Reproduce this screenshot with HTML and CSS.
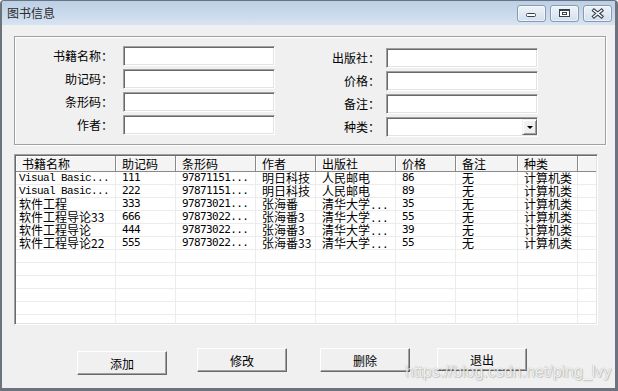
FILE: index.html
```html
<!DOCTYPE html>
<html lang="zh-CN">
<head>
<meta charset="utf-8">
<title>图书信息</title>
<link rel="stylesheet" href="styles.css">
</head>
<body>
<div class="window">
  <div class="titlebar">
    <span class="title">图书信息</span>
    <div class="caption">
      <span class="cbtn"><svg width="27" height="15" viewBox="0 0 27 15"><rect x="8.5" y="7.5" width="9" height="3" rx="1" fill="#fff" stroke="#36404e"/></svg></span>
      <span class="cbtn"><svg width="27" height="15" viewBox="0 0 27 15"><rect x="8.5" y="3.5" width="10" height="7" fill="#fff" stroke="#36404e"/><rect x="8.5" y="3.5" width="10" height="1.5" fill="#36404e"/><rect x="11.5" y="6.5" width="4" height="2" fill="none" stroke="#36404e"/></svg></span>
      <span class="cbtn"><svg width="27" height="15" viewBox="0 0 27 15"><path d="M10 4.5 L17.5 10.5 M17.5 4.5 L10 10.5" stroke="#36404e" stroke-width="3.6" stroke-linecap="square"/><path d="M10 4.5 L17.5 10.5 M17.5 4.5 L10 10.5" stroke="#fff" stroke-width="1.6" stroke-linecap="square"/></svg></span>
    </div>
  </div>
  <div class="client">
    <div class="group">
      <div class="form form-left">
        <span class="lbl">书籍名称：</span><span class="field"></span>
        <span class="lbl">助记码：</span><span class="field"></span>
        <span class="lbl">条形码：</span><span class="field"></span>
        <span class="lbl">作者：</span><span class="field"></span>
      </div>
      <div class="form form-right">
        <span class="lbl">出版社：</span><span class="field"></span>
        <span class="lbl">价格：</span><span class="field"></span>
        <span class="lbl">备注：</span><span class="field"></span>
        <span class="lbl">种类：</span><span class="field combo"><span class="dd"><span class="tri"></span></span></span>
      </div>
    </div>

    <div class="listview">
      <div class="lv-row lv-head">
        <span class="hc">书籍名称</span><span class="hc">助记码</span><span class="hc">条形码</span><span class="hc">作者</span><span class="hc">出版社</span><span class="hc">价格</span><span class="hc">备注</span><span class="hc">种类</span><span class="hc"></span>
      </div>
      <div class="lv-row">
        <span class="c first mono">Visual Basic...</span><span class="c num">111</span><span class="c num">97871151...</span><span class="c">明日科技</span><span class="c">人民邮电</span><span class="c num">86</span><span class="c">无</span><span class="c">计算机类</span><span class="c last"></span>
      </div>
      <div class="lv-row">
        <span class="c first mono">Visual Basic...</span><span class="c num">222</span><span class="c num">97871151...</span><span class="c">明日科技</span><span class="c">人民邮电</span><span class="c num">89</span><span class="c">无</span><span class="c">计算机类</span><span class="c last"></span>
      </div>
      <div class="lv-row">
        <span class="c first">软件工程</span><span class="c num">333</span><span class="c num">97873021...</span><span class="c">张海番</span><span class="c">清华大学<span class="num">...</span></span><span class="c num">35</span><span class="c">无</span><span class="c">计算机类</span><span class="c last"></span>
      </div>
      <div class="lv-row">
        <span class="c first">软件工程导论33</span><span class="c num">666</span><span class="c num">97873022...</span><span class="c">张海番3</span><span class="c">清华大学<span class="num">...</span></span><span class="c num">55</span><span class="c">无</span><span class="c">计算机类</span><span class="c last"></span>
      </div>
      <div class="lv-row">
        <span class="c first">软件工程导论</span><span class="c num">444</span><span class="c num">97873022...</span><span class="c">张海番3</span><span class="c">清华大学<span class="num">...</span></span><span class="c num">39</span><span class="c">无</span><span class="c">计算机类</span><span class="c last"></span>
      </div>
      <div class="lv-row">
        <span class="c first">软件工程导论22</span><span class="c num">555</span><span class="c num">97873022...</span><span class="c">张海番33</span><span class="c">清华大学<span class="num">...</span></span><span class="c num">55</span><span class="c">无</span><span class="c">计算机类</span><span class="c last"></span>
      </div>
      <div class="lv-row"><span class="c"></span><span class="c"></span><span class="c"></span><span class="c"></span><span class="c"></span><span class="c"></span><span class="c"></span><span class="c"></span><span class="c last"></span></div>
      <div class="lv-row"><span class="c"></span><span class="c"></span><span class="c"></span><span class="c"></span><span class="c"></span><span class="c"></span><span class="c"></span><span class="c"></span><span class="c last"></span></div>
      <div class="lv-row"><span class="c"></span><span class="c"></span><span class="c"></span><span class="c"></span><span class="c"></span><span class="c"></span><span class="c"></span><span class="c"></span><span class="c last"></span></div>
      <div class="lv-row"><span class="c"></span><span class="c"></span><span class="c"></span><span class="c"></span><span class="c"></span><span class="c"></span><span class="c"></span><span class="c"></span><span class="c last"></span></div>
      <div class="lv-row"><span class="c"></span><span class="c"></span><span class="c"></span><span class="c"></span><span class="c"></span><span class="c"></span><span class="c"></span><span class="c"></span><span class="c last"></span></div>
      <div class="lv-row"><span class="c"></span><span class="c"></span><span class="c"></span><span class="c"></span><span class="c"></span><span class="c"></span><span class="c"></span><span class="c"></span><span class="c last"></span></div>
    </div>

    <div class="buttons">
      <button class="btn btn-add">添加</button>
      <button class="btn btn-edit">修改</button>
      <button class="btn btn-del">删除</button>
      <button class="btn btn-exit">退出</button>
    </div>
  </div>
  <div class="watermark">https://blog.csdn.net/ping_lvy</div>
</div>
</body>
</html>
```

FILE: styles.css
```css
* { box-sizing: border-box; }
html, body { margin: 0; padding: 0; }
body {
  width: 618px;
  height: 391px;
  overflow: hidden;
  background: #fff;
  font-family: "Noto Sans CJK SC", "Liberation Sans", sans-serif;
  font-size: 12px;
  color: #000;
}
.window {
  position: relative;
  width: 618px;
  height: 391px;
  border-style: solid;
  border-color: #6a737e;
  border-width: 1px 3px 3px 2px;
  border-radius: 4px 4px 0 0;
  background: #f0f0f0;
  display: flex;
  flex-direction: column;
  overflow: hidden;
}
.titlebar {
  flex: none;
  height: 24px;
  display: flex;
  align-items: flex-start;
  padding: 0 3px 0 5px;
  background: linear-gradient(#bccfe6, #d6e3f2);
}
.title {
  flex: 1;
  line-height: 24px;
  font-size: 12px;
  color: #2b2b2b;
}
.caption {
  display: flex;
  gap: 4px;
  margin-top: 4px;
}
.cbtn {
  display: block;
  width: 29px;
  height: 17px;
  border: 1px solid #8899b1;
  border-radius: 3px;
  background: linear-gradient(#eef3f9, #d3dfed);
  box-shadow: inset 0 0 0 1px rgba(255,255,255,0.55);
}
.cbtn svg { display: block; }

.client {
  flex: 1;
  padding: 11px 0 0 12px;
}

.group {
  width: 592px;
  height: 109px;
  display: flex;
  border: 1px solid #a0a0a0;
  box-shadow: inset 1px 1px 0 #fff, 1px 1px 0 #fff;
}
.form {
  display: grid;
  grid-auto-rows: 20px;
  row-gap: 3px;
  align-content: start;
}
.form-left {
  grid-template-columns: 98px 152px;
  column-gap: 10px;
  padding-top: 9px;
}
.form-right {
  grid-template-columns: 80px 152px;
  column-gap: 6px;
  padding-top: 11px;
  margin-left: 25px;
}
.lbl {
  text-align: right;
  line-height: 20px;
  white-space: nowrap;
  color: #000;
}
.field {
  display: block;
  background: #fff;
  border: 1px solid;
  border-color: #a0a0a0 #fff #fff #a0a0a0;
  box-shadow: inset 1px 1px 0 #696969, inset -1px -1px 0 #e3e3e3;
}
.combo {
  display: flex;
  justify-content: flex-end;
  padding-top: 1px;
}
.dd {
  width: 15px;
  height: 16px;
  display: flex;
  align-items: center;
  justify-content: center;
  background: #f0f0f0;
  border: 1px solid;
  border-color: #f0f0f0 #696969 #696969 #f0f0f0;
  box-shadow: inset 1px 1px 0 #fff, inset -1px -1px 0 #a0a0a0;
}
.tri {
  width: 0;
  height: 0;
  border-left: 3px solid transparent;
  border-right: 3px solid transparent;
  border-top: 3px solid #000;
  margin-top: 1px;
}

.listview {
  margin-top: 9px;
  width: 584px;
  height: 171px;
  padding: 1px;
  overflow: hidden;
  background: #fff;
  border: 1px solid;
  border-color: #a0a0a0 #fff #fff #a0a0a0;
  box-shadow: inset 1px 1px 0 #696969, inset -1px -1px 0 #e3e3e3;
}
.lv-row {
  display: grid;
  grid-template-columns: 100px 60px 80px 60px 80px 60px 62px 60px 1fr;
  height: 13px;
}
.lv-head {
  height: 16px;
}
.hc {
  display: block;
  height: 16px;
  padding-left: 6px;
  line-height: 15px;
  white-space: nowrap;
  overflow: hidden;
  background: #f4f4f4;
  border-right: 1px solid #8a8a8a;
  border-bottom: 1px solid #8a8a8a;
  box-shadow: inset 1px 1px 0 #fff;
}
.hc:last-child { border-right: 0; }
.c {
  display: block;
  height: 13px;
  padding-left: 6px;
  line-height: 12px;
  white-space: nowrap;
  overflow: visible;
  border-right: 1px solid #ececec;
  border-bottom: 1px solid #ececec;
}
.c.first { padding-left: 3px; }
.c.last { border-right: 0; }
.mono {
  font-family: "Liberation Mono", monospace;
  font-size: 11px;
  letter-spacing: -0.6px;
}
.num {
  font-family: "DejaVu Sans Mono", monospace;
  font-size: 11px;
  letter-spacing: -0.6px;
}

.buttons {
  display: flex;
  align-items: flex-start;
  margin-top: 23px;
  padding-left: 63px;
}
.btn {
  width: 90px;
  height: 24px;
  padding: 0;
  margin: 0;
  display: flex;
  align-items: center;
  justify-content: center;
  font-family: "Noto Sans CJK SC", sans-serif;
  font-size: 12px;
  color: #000;
  background: #f0f0f0;
  border: 1px solid;
  border-color: #fff #696969 #696969 #fff;
  box-shadow: inset -1px -1px 0 #a0a0a0;
  border-radius: 0;
}
.btn-add { margin-top: 3px; }
.btn-edit { margin-left: 30px; }
.btn-del { margin-left: 33px; }
.btn-exit { margin-left: 27px; height: 23px; }

.watermark {
  position: absolute;
  left: 403px;
  top: 361px;
  font-family: "Liberation Sans", sans-serif;
  font-size: 16px;
  line-height: 20px;
  white-space: nowrap;
  color: rgba(255, 255, 255, 0.85);
  text-shadow: 0 0 1px rgba(0, 0, 0, 0.35), 1px 1px 1px rgba(0, 0, 0, 0.15);
}
```
